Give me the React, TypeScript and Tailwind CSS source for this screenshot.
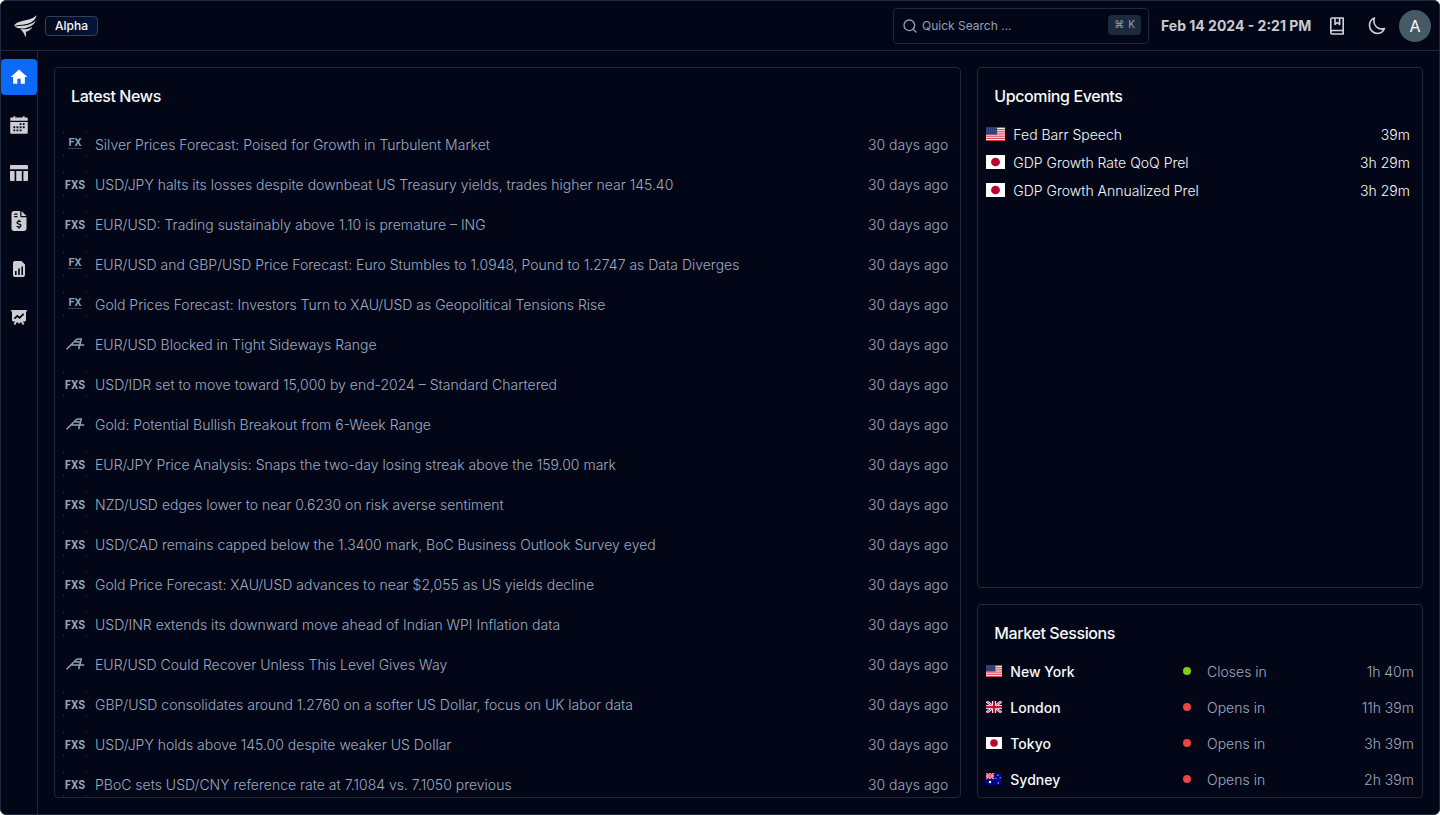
import type { ReactNode } from "react";
import { Search } from "lucide-react";
import { MdHome } from "react-icons/md";
import { IoCalendarSharp } from "react-icons/io5";
import { FaFileInvoiceDollar } from "react-icons/fa6";

type Source = "fx" | "fxs" | "af";
type Country = "us" | "jp" | "gb" | "au";

const news: { source: Source; title: string }[] = [
  { source: "fx", title: "Silver Prices Forecast: Poised for Growth in Turbulent Market" },
  { source: "fxs", title: "USD/JPY halts its losses despite downbeat US Treasury yields, trades higher near 145.40" },
  { source: "fxs", title: "EUR/USD: Trading sustainably above 1.10 is premature – ING" },
  { source: "fx", title: "EUR/USD and GBP/USD Price Forecast: Euro Stumbles to 1.0948, Pound to 1.2747 as Data Diverges" },
  { source: "fx", title: "Gold Prices Forecast: Investors Turn to XAU/USD as Geopolitical Tensions Rise" },
  { source: "af", title: "EUR/USD Blocked in Tight Sideways Range" },
  { source: "fxs", title: "USD/IDR set to move toward 15,000 by end-2024 – Standard Chartered" },
  { source: "af", title: "Gold: Potential Bullish Breakout from 6-Week Range" },
  { source: "fxs", title: "EUR/JPY Price Analysis: Snaps the two-day losing streak above the 159.00 mark" },
  { source: "fxs", title: "NZD/USD edges lower to near 0.6230 on risk averse sentiment" },
  { source: "fxs", title: "USD/CAD remains capped below the 1.3400 mark, BoC Business Outlook Survey eyed" },
  { source: "fxs", title: "Gold Price Forecast: XAU/USD advances to near $2,055 as US yields decline" },
  { source: "fxs", title: "USD/INR extends its downward move ahead of Indian WPI Inflation data" },
  { source: "af", title: "EUR/USD Could Recover Unless This Level Gives Way" },
  { source: "fxs", title: "GBP/USD consolidates around 1.2760 on a softer US Dollar, focus on UK labor data" },
  { source: "fxs", title: "USD/JPY holds above 145.00 despite weaker US Dollar" },
  { source: "fxs", title: "PBoC sets USD/CNY reference rate at 7.1084 vs. 7.1050 previous" },
];

const events: { country: Country; name: string; due: string }[] = [
  { country: "us", name: "Fed Barr Speech", due: "39m" },
  { country: "jp", name: "GDP Growth Rate QoQ Prel", due: "3h 29m" },
  { country: "jp", name: "GDP Growth Annualized Prel", due: "3h 29m" },
];

const sessions: { country: Country; city: string; open: boolean; left: string }[] = [
  { country: "us", city: "New York", open: true, left: "1h 40m" },
  { country: "gb", city: "London", open: false, left: "11h 39m" },
  { country: "jp", city: "Tokyo", open: false, left: "3h 39m" },
  { country: "au", city: "Sydney", open: false, left: "2h 39m" },
];

function TableIcon() {
  return (
    <svg viewBox="0 0 20 20" className="size-5" fill="currentColor" aria-hidden="true">
      <path d="M1 3a1 1 0 0 1 1-1h16a1 1 0 0 1 1 1v3.2H1zM1 8h4.6v10H2a1 1 0 0 1-1-1zM7.2 8h5.6v10H7.2zM14.4 8H19v9a1 1 0 0 1-1 1h-3.6z" />
    </svg>
  );
}

function ChartFileIcon() {
  return (
    <svg viewBox="0 0 20 20" className="size-5" fill="currentColor" aria-hidden="true">
      <path
        fillRule="evenodd"
        d="M6 2h6.4L16 5.6V16a2 2 0 0 1-2 2H6a2 2 0 0 1-2-2V4a2 2 0 0 1 2-2zM6 12v4h1.6v-4zM9.2 9.6V16h1.6V9.6zM12.4 7.4V16H14V7.4z"
      />
    </svg>
  );
}

function PresentationIcon() {
  return (
    <svg viewBox="0 0 20 20" className="size-5" aria-hidden="true">
      <path
        fill="currentColor"
        d="M2.6 3h14.8a.7.7 0 0 1 0 1.6H17v8.4a1.5 1.5 0 0 1-1.5 1.500h-1.500l1.400 2.600-1.600.8-1.700-2.900-2.100 1.800-2.100-1.800-1.700 2.900-1.600-.8 1.400-2.600h-1.500A1.500 1.500 0 0 1 3 13V4.600h-.4a.7.7 0 0 1 0-1.600z"
      />
      <path d="M5.400 11.600L8.300 8.900l2.200 1.900 4.200-4" fill="none" stroke="#020617" strokeWidth="1.8" />
    </svg>
  );
}

function JournalIcon() {
  return (
    <svg viewBox="0 0 20 20" className="size-5" fill="none" stroke="currentColor" strokeWidth="1.6" strokeLinejoin="round" aria-hidden="true">
      <path d="M3.8 15.5V3.3A1.3 1.3 0 0 1 5.100 2h11.100v16H5.300a1.500 1.500 0 0 1-1.500-1.500v-.4a1.600 1.600 0 0 1 1.500-1.600h10.900" />
      <path d="M8 2v6.5l2.3-2 2.3 2V2" />
    </svg>
  );
}

function MoonIcon() {
  return (
    <svg viewBox="0 0 24 24" className="size-5" fill="none" stroke="currentColor" strokeWidth="1.9" strokeLinecap="round" strokeLinejoin="round" aria-hidden="true">
      <path d="M21 15A9.75 9.75 0 0 1 18 15.750C12.600 15.750 8.250 11.400 8.250 6C8.250 4.670 8.510 3.400 9 2.250A9.750 9.750 0 0 0 3 11.250C3 16.600 7.400 21 12.750 21A9.750 9.750 0 0 0 21 15Z" />
    </svg>
  );
}

const nav = [
  { label: "Home", icon: <MdHome className="size-5" />, active: true },
  { label: "Calendar", icon: <IoCalendarSharp className="size-5" /> },
  { label: "Tables", icon: <TableIcon /> },
  { label: "Reports", icon: <FaFileInvoiceDollar className="size-5" /> },
  { label: "Statistics", icon: <ChartFileIcon /> },
  { label: "Analysis", icon: <PresentationIcon /> },
];

function Flag({ country, className }: { country: Country; className: string }) {
  return (
    <svg viewBox="0 0 24 18" className={className} preserveAspectRatio="none" aria-hidden="true">
      {country === "us" && (
        <>
          <rect width="24" height="18" fill="#fff" />
          {[0, 1, 2, 3, 4, 5, 6].map((i) => (
            <rect key={i} y={(i * 36) / 13} width="24" height={18 / 13} fill="#d02f44" />
          ))}
          <rect width="14" height="9.7" fill="#2b3a70" />
          {[0, 1, 2, 3].map((r) =>
            [0, 1, 2, 3, 4].map((c) => (
              <circle key={`${r}-${c}`} cx={1.6 + c * 2.6} cy={1.4 + r * 2.3} r="0.4" fill="#8f9abf" />
            )),
          )}
        </>
      )}
      {country === "jp" && (
        <>
          <rect width="24" height="18" fill="#fff" />
          <circle cx="12" cy="9" r="5.6" fill="#bc002d" />
        </>
      )}
      {country === "gb" && (
        <>
          <rect width="24" height="18" fill="#012169" />
          <path d="M0 0l24 18M24 0L0 18" stroke="#fff" strokeWidth="3.6" />
          <path d="M0 0l24 18M24 0L0 18" stroke="#c8102e" strokeWidth="1.3" />
          <path d="M12 0v18M0 9h24" stroke="#fff" strokeWidth="6" />
          <path d="M12 0v18M0 9h24" stroke="#c8102e" strokeWidth="3.4" />
        </>
      )}
      {country === "au" && (
        <>
          <rect width="24" height="18" fill="#00008b" />
          <path d="M0 0l12 9M12 0L0 9" stroke="#fff" strokeWidth="2" />
          <path d="M0 0l12 9M12 0L0 9" stroke="#f22" strokeWidth="1" />
          <path d="M6 0v9M0 4.5h12" stroke="#fff" strokeWidth="3" />
          <path d="M6 0v9M0 4.5h12" stroke="#f22" strokeWidth="1.8" />
          <circle cx="6" cy="13.6" r="1.9" fill="#fff" />
          <circle cx="18" cy="3.2" r="0.9" fill="#fff" />
          <circle cx="15" cy="7.9" r="0.9" fill="#fff" />
          <circle cx="21.2" cy="6.8" r="0.9" fill="#fff" />
          <circle cx="18.3" cy="15" r="1" fill="#fff" />
          <circle cx="19.6" cy="9.8" r="0.5" fill="#fff" />
        </>
      )}
    </svg>
  );
}

function SourceLogo({ source }: { source: Source }) {
  return (
    <svg viewBox="0 0 24 24" className="size-6 shrink-0 text-slate-400" fill="currentColor" aria-hidden="true">
      {source !== "af" && (
        <g fill="#334155">
          <rect width="1" height="1" />
          <rect x="23" width="1" height="1" />
          <rect y="23" width="1" height="1" />
          <rect x="23" y="23" width="1" height="1" />
        </g>
      )}
      {source === "fxs" && (
        <text
          x="12"
          y="17"
          textAnchor="middle"
          fontSize="13"
          fontWeight="600"
          fontFamily="'Roboto Condensed', Roboto, sans-serif"
        >
          FXS
        </text>
      )}
      {source === "fx" && (
        <>
          <text x="12" y="14" textAnchor="middle" fontSize="11" fontWeight="600" fontFamily="Roboto, sans-serif">
            FX
          </text>
          <path d="M5 16.5h14" stroke="currentColor" strokeDasharray="1.5 0.5" strokeOpacity="0.5" />
        </>
      )}
      {source === "af" && (
        <path
          fill="none"
          stroke="currentColor"
          strokeWidth="1.5"
          d="M3.5 17.3L13 8Q14 7 15.5 7H18.3L15.6 17.3M7.6 12.9H21.3M12.2 9.9H17.4"
        />
      )}
    </svg>
  );
}

function BirdLogo() {
  return (
    <svg viewBox="0 0 24 24" className="size-6" fill="#d3d6db" aria-hidden="true">
      <path d="M23.6 1.2C19.5 5.2 14 5.9 8.5 7.2C4.6 8.1 2 9.400 1 12.100C4 11 8 11.200 12.400 10.300C18.600 9 22.700 6 23.600 1.200Z" />
      <path d="M22.600 6.800C19.5 10 15.500 11 11.600 11.400C7.500 11.800 4.500 11.700 1.600 12.600C5.200 14.900 9.400 14.900 13.200 13.900C17.800 12.700 21.600 10.500 22.600 6.800Z" />
      <path d="M19.200 12.900C15.800 15 11.600 15.600 7.200 15.300C9.800 17.200 11.600 19.800 12.400 23.300C13.400 21.300 13 19.400 12.700 17.800C15.400 17 18.600 15.400 19.200 12.900Z" />
    </svg>
  );
}

function Card({ title, className, children }: { title: string; className?: string; children: ReactNode }) {
  return (
    <section className={`flex flex-col overflow-hidden rounded border border-slate-800 ${className ?? ""}`}>
      <h2 className="p-4 text-base leading-6 font-medium tracking-tight text-slate-50">{title}</h2>
      {children}
    </section>
  );
}

export default function App() {
  return (
    <div className="flex h-screen flex-col overflow-hidden rounded-md border border-slate-800 bg-[#020617] font-[Inter,sans-serif] text-sm text-slate-50">
      <header className="flex h-[50px] shrink-0 items-center justify-between border-b border-slate-800 pr-2 pl-3">
        <div className="flex items-center gap-2">
          <BirdLogo />
          <span className="rounded border border-slate-700 bg-linear-to-r from-[#020a1c] to-[#06153a] px-[9px] text-xs leading-[18px] font-medium">
            Alpha
          </span>
        </div>
        <div className="flex items-center">
          <label className="flex h-9 w-64 items-center gap-1 rounded-sm border border-slate-800 pr-[7px] pl-2 text-slate-400">
            <Search className="size-4 shrink-0" strokeWidth={2} />
            <input
              type="text"
              aria-label="Quick Search"
              placeholder="Quick Search ..."
              className="min-w-0 flex-1 bg-transparent text-xs outline-none placeholder:text-slate-400"
            />
            <kbd className="mb-[2px] flex h-5 items-center gap-1 rounded bg-slate-800 px-[6px] font-[Inter,'DejaVu_Sans',sans-serif] text-[10px] text-slate-400">
              <span>⌘</span>
              <span>K</span>
            </kbd>
          </label>
          <time className="ml-3 min-w-[154px] font-bold text-[#c8cad0]">Feb 14 2024 - 2:21 PM</time>
          <button type="button" aria-label="Journal" className="ml-3 text-[#d0d3d9]">
            <JournalIcon />
          </button>
          <button type="button" aria-label="Toggle theme" className="ml-5 text-[#d0d3d9]">
            <MoonIcon />
          </button>
          <button type="button" aria-label="Account" className="ml-3 size-8 rounded-full bg-[#455a64] text-base text-white">
            A
          </button>
        </div>
      </header>

      <div className="flex min-h-0 flex-1">
        <nav className="flex w-[37px] shrink-0 flex-col gap-3 border-r border-slate-800 pt-2">
          {nav.map((item) => (
            <a
              key={item.label}
              href="#"
              aria-label={item.label}
              className={`flex size-9 items-center justify-center rounded-sm ${item.active ? "bg-[#0d6af8] text-white" : "text-[#ccced3]"}`}
            >
              {item.icon}
            </a>
          ))}
        </nav>

        <main className="grid min-h-0 flex-1 grid-cols-3 gap-4 p-4">
          <Card title="Latest News" className="col-span-2 min-h-0">
            <ul className="min-h-0 flex-1 overflow-hidden">
              {news.map((item) => (
                <li key={item.title} className="flex h-10 items-center gap-2 pr-3 pl-2 font-light text-[#9dabc0]">
                  <SourceLogo source={item.source} />
                  <a href="#" className="min-w-0 flex-1 truncate pt-[2px]">
                    {item.title}
                  </a>
                  <span className="shrink-0 pt-[2px]">30 days ago</span>
                </li>
              ))}
            </ul>
          </Card>

          <div className="flex min-h-0 flex-col gap-4">
            <Card title="Upcoming Events" className="min-h-0 flex-1">
              <ul className="-mt-1">
                {events.map((event) => (
                  <li key={event.name} className="flex h-7 items-center pr-3 pl-2 font-light">
                    <Flag country={event.country} className="mr-2 h-[14px] w-[19px]" />
                    <span className="flex-1 pt-[2px]">{event.name}</span>
                    <span className="pt-[2px]">{event.due}</span>
                  </li>
                ))}
              </ul>
            </Card>

            <Card title="Market Sessions" className="shrink-0">
              <ul className="-mt-2">
                {sessions.map((session) => (
                  <li key={session.city} className="flex h-9 items-center px-2">
                    <Flag country={session.country} className="mr-2 h-3 w-4" />
                    <span className="flex-1 pt-[2px] font-medium">{session.city}</span>
                    <div className="flex basis-[54%] items-center font-light text-[#9dabc0]">
                      <span className={`mr-4 size-2 rounded-full ${session.open ? "bg-[#84cc16]" : "bg-[#ef4444]"}`} />
                      <span className="flex-1 pt-[2px]">{session.open ? "Closes in" : "Opens in"}</span>
                      <span className="pt-[2px]">{session.left}</span>
                    </div>
                  </li>
                ))}
              </ul>
            </Card>
          </div>
        </main>
      </div>
    </div>
  );
}
